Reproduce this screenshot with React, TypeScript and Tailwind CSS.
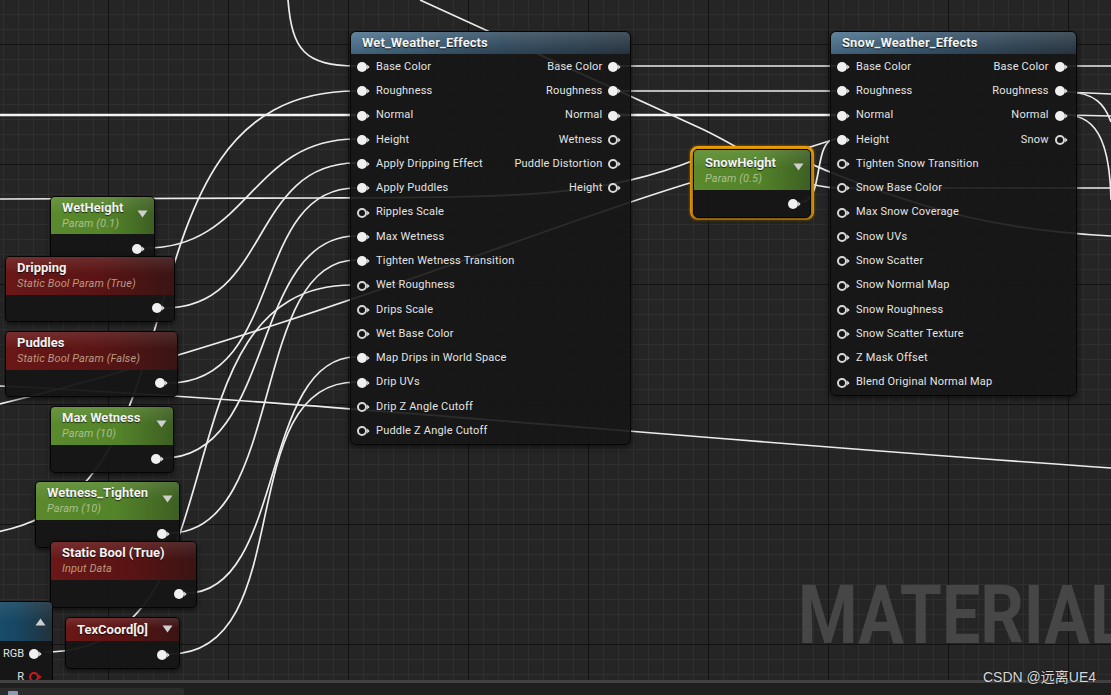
import React from "react";

type Row = [string, boolean];

function Pin({ filled, red }: { filled: boolean; red?: boolean }) {
  const c = red ? "#d01818" : "#f0f0f0";
  return (
    <svg width="14" height="12" viewBox="0 0 14 12" className="shrink-0">
      {filled ? (
        <circle cx="6" cy="6" r="5" fill={c} />
      ) : (
        <circle cx="6" cy="6" r="4" fill="#141414" stroke={red ? c : "#d8d8d8"} strokeWidth="2" />
      )}
      <path d="M11.2 3.6 L13.6 6 L11.2 8.4 Z" fill={red ? c : "#e8e8e8"} />
    </svg>
  );
}

function Tri({ up }: { up?: boolean }) {
  return (
    <svg width="11" height="8" viewBox="0 0 11 8">
      {up ? <path d="M0.5 7.5 L5.5 0.5 L10.5 7.5 Z" fill="#cfcfcf" /> : <path d="M0.5 0.5 L10.5 0.5 L5.5 7.5 Z" fill="#cfcfcf" />}
    </svg>
  );
}

function BigNode({ className, title, inputs, outputs, outPr }: { className: string; title: string; inputs: Row[]; outputs: Row[]; outPr: string }) {
  return (
    <div className={"absolute rounded-[6px] border border-[#060606] bg-[#151615]/90 shadow-[0_2px_6px_rgba(0,0,0,0.6)] " + className}>
      <div className="h-[22px] rounded-t-[5px] bg-[linear-gradient(to_bottom,rgba(255,255,255,0.12),rgba(0,0,0,0.15)),linear-gradient(to_right,#4b7490,#36536a_45%,#2a3a47)] pl-[11px] flex items-center">
        <span className="text-[13px] font-bold text-[#f2f2f2] tracking-[0.1px] [text-shadow:0_1px_1px_rgba(0,0,0,0.8)]">{title}</span>
      </div>
      <div className="flex justify-between pt-[1px]">
        <div className="flex flex-col">
          {inputs.map(([l, f]) => (
            <div key={l} className="h-[24.27px] flex items-center pl-[5px]">
              <Pin filled={f} />
              <span className="ml-[6px] text-[11px] tracking-[0.2px] text-[#e4e4e4] whitespace-nowrap">{l}</span>
            </div>
          ))}
        </div>
        <div className={"flex flex-col items-end " + outPr}>
          {outputs.map(([l, f]) => (
            <div key={l} className="h-[24.27px] flex items-center">
              <span className="mr-[5px] text-[11px] tracking-[0.2px] text-[#e4e4e4] whitespace-nowrap">{l}</span>
              <Pin filled={f} />
            </div>
          ))}
        </div>
      </div>
    </div>
  );
}

function ParamNode({
  className,
  title,
  sub,
  red,
  tri,
  headH,
  bodyH,
}: {
  className: string;
  title: string;
  sub?: string;
  red?: boolean;
  tri?: boolean;
  headH: string;
  bodyH: string;
}) {
  const head = red
    ? "bg-[linear-gradient(to_bottom,rgba(255,255,255,0.10),rgba(255,255,255,0)_45%),linear-gradient(to_right,#6a1717,#5a1414_55%,#3a1414)]"
    : "bg-[linear-gradient(to_bottom,rgba(255,255,255,0.10),rgba(255,255,255,0)_45%),linear-gradient(to_right,#5a8a2c,#54842a_55%,#3d5f22)]";
  return (
    <div className={"absolute rounded-[5px] border border-[#050505] bg-[#141514]/95 shadow-[0_2px_5px_rgba(0,0,0,0.6)] " + className}>
      <div className={"relative rounded-t-[4px] pl-[11px] " + head + " " + headH + (sub ? " pt-[2px]" : " flex items-center")}>
        <div className="text-[13px] leading-[17px] font-bold text-[#f2f2f2] [text-shadow:0_1px_1px_rgba(0,0,0,0.7)] whitespace-nowrap">{title}</div>
        {sub && (
          <div className={"text-[11px] leading-[14px] italic mt-[1px] tracking-[0.1px] whitespace-nowrap " + (red ? "text-[#b99a82]" : "text-[#a9bf8c]")}>{sub}</div>
        )}
        {tri && (
          <div className={"absolute right-[6px] " + (sub ? "top-[13px]" : "top-[7px]")}>
            <Tri />
          </div>
        )}
      </div>
      <div className={"flex items-center justify-end pr-[9px] " + bodyH}>
        <Pin filled />
      </div>
    </div>
  );
}

const wetIn: Row[] = [
  ["Base Color", true],
  ["Roughness", true],
  ["Normal", true],
  ["Height", true],
  ["Apply Dripping Effect", true],
  ["Apply Puddles", true],
  ["Ripples Scale", false],
  ["Max Wetness", true],
  ["Tighten Wetness Transition", true],
  ["Wet Roughness", false],
  ["Drips Scale", false],
  ["Wet Base Color", false],
  ["Map Drips in World Space", true],
  ["Drip UVs", true],
  ["Drip Z Angle Cutoff", false],
  ["Puddle Z Angle Cutoff", false],
];
const wetOut: Row[] = [
  ["Base Color", true],
  ["Roughness", true],
  ["Normal", true],
  ["Wetness", false],
  ["Puddle Distortion", false],
  ["Height", false],
];
const snowIn: Row[] = [
  ["Base Color", true],
  ["Roughness", true],
  ["Normal", true],
  ["Height", true],
  ["Tighten Snow Transition", false],
  ["Snow Base Color", false],
  ["Max Snow Coverage", false],
  ["Snow UVs", false],
  ["Snow Scatter", false],
  ["Snow Normal Map", false],
  ["Snow Roughness", false],
  ["Snow Scatter Texture", false],
  ["Z Mask Offset", false],
  ["Blend Original Normal Map", false],
];
const snowOut: Row[] = [
  ["Base Color", true],
  ["Roughness", true],
  ["Normal", true],
  ["Snow", false],
];

const wires: string[] = [
  "M 288 0 C 292 50 305 66 356 66",
  "M -40 535 C 230 535 90 91 356 91",
  "M 146 248 C 250 248 250 139 356 139",
  "M 165 308 C 270 308 250 163 356 163",
  "M 169 383 C 285 383 250 188 356 188",
  "M 164 458 C 275 458 250 236 356 236",
  "M 170 533 C 285 533 250 260 356 260",
  "M 187 593 C 285 593 260 357 356 357",
  "M 170 654 C 300 654 230 382 356 382",
  "M 45 652 C 250 652 150 285 352 285",
  "M 619 66 L 836 66",
  "M 619 91 L 836 91",
  "M 0 199 L 320 198 C 520 197 600 198 700 158 C 760 136 800 160 830 172 C 930 212 1000 230 1111 236",
  "M 0 404 C 300 330 560 220 700 180 C 770 160 800 150 836 139",
  "M 801 202 C 825 202 812 139 836 139",
  "M 420 0 L 700 128 C 760 156 790 188 840 188 L 1111 188",
  "M 0 386 C 300 400 700 440 1111 468",
  "M 1066 66 L 1111 66",
  "M 1066 92 L 1111 94",
  "M 1066 92 C 1095 92 1105 105 1111 122",
  "M 1066 115 L 1111 116",
  "M 1066 115 C 1100 115 1110 150 1111 200",
];

function Grid() {
  const minorV: number[] = [];
  const minorH: number[] = [];
  for (let x = 3; x < 1111; x += 15) minorV.push(x);
  for (let y = 14; y < 690; y += 15) minorH.push(y);
  return (
    <svg className="absolute inset-0" width="1111" height="680">
      {minorV.map((x) => (
        <line key={"v" + x} x1={x + 0.5} y1="0" x2={x + 0.5} y2="680" stroke={(x - 108) % 120 === 0 ? "#121212" : "#2f2f2f"} strokeWidth="1" />
      ))}
      {minorH.map((y) => (
        <line key={"h" + y} x1="0" y1={y + 0.5} x2="1111" y2={y + 0.5} stroke={(y - 44) % 120 === 0 ? "#121212" : "#2f2f2f"} strokeWidth="1" />
      ))}
      {minorV.filter((x) => (x - 108) % 120 === 0).map((x) => (
        <line key={"V" + x} x1={x + 0.5} y1="0" x2={x + 0.5} y2="680" stroke="#121212" strokeWidth="1" />
      ))}
    </svg>
  );
}

function Wires() {
  return (
    <svg className="absolute inset-0" width="1111" height="680">
      <path d="M 0 115 L 356 115" stroke="#f4f4f4" strokeWidth="2.4" fill="none" />
      <path d="M 619 115 L 836 115" stroke="#f4f4f4" strokeWidth="2.4" fill="none" />
      {wires.map((d, i) => (
        <path key={i} d={d} stroke="#ececec" strokeWidth="1.7" fill="none" />
      ))}
    </svg>
  );
}

export default function App() {
  return (
    <div className="w-[1111px] h-[695px] overflow-hidden flex flex-col bg-[#1d1d1d] font-[family-name:Roboto,'Liberation_Sans',sans-serif] relative">
      <div className="relative h-[680px] shrink-0 overflow-hidden bg-[#252525]">
        <Grid />
        <div className="absolute left-[798px] top-[566px] origin-left scale-x-[0.84] text-[81px] leading-[100px] font-bold text-[#4a4a4a]/90 whitespace-nowrap select-none">
          MATERIAL
        </div>
        <Wires />

        <BigNode className="left-[350px] top-[31px] w-[281px] h-[414px]" title="Wet_Weather_Effects" inputs={wetIn} outputs={wetOut} outPr="pr-[9px]" />
        <BigNode className="left-[830px] top-[31px] w-[247px] h-[365px]" title="Snow_Weather_Effects" inputs={snowIn} outputs={snowOut} outPr="pr-[10px]" />

        <div className="absolute left-[690px] top-[146px] w-[124px] h-[74px] rounded-[8px] border-[3px] border-[#f0a00a] shadow-[0_0_3px_rgba(240,160,0,0.6)]" />
        <ParamNode className="left-[693px] top-[149px] w-[118px]" title="SnowHeight" sub="Param (0.5)" tri headH="h-[40px] pt-[4px]" bodyH="h-[27px]" />

        <ParamNode className="left-[50px] top-[196px] w-[105px]" title="WetHeight" sub="Param (0.1)" tri headH="h-[37px]" bodyH="h-[30px]" />
        <ParamNode className="left-[5px] top-[256px] w-[170px]" title="Dripping" sub="Static Bool Param (True)" red headH="h-[38px]" bodyH="h-[26px]" />
        <ParamNode className="left-[5px] top-[331px] w-[173px]" title="Puddles" sub="Static Bool Param (False)" red headH="h-[38px]" bodyH="h-[26px]" />
        <ParamNode className="left-[50px] top-[406px] w-[124px]" title="Max Wetness" sub="Param (10)" tri headH="h-[38px]" bodyH="h-[27px]" />
        <ParamNode className="left-[35px] top-[481px] w-[145px]" title="Wetness_Tighten" sub="Param (10)" tri headH="h-[38px]" bodyH="h-[27px]" />
        <ParamNode className="left-[50px] top-[541px] w-[147px]" title="Static Bool (True)" sub="Input Data" red headH="h-[38px]" bodyH="h-[27px]" />
        <ParamNode className="left-[65px] top-[617px] w-[115px]" title="TexCoord[0]" red tri headH="h-[23px]" bodyH="h-[27px]" />

        <div className="absolute left-[-40px] top-[601px] w-[93px] h-[100px] rounded-[5px] border border-[#050505] bg-[#141514]/95">
          <div className="relative h-[39px] rounded-t-[4px] bg-[linear-gradient(to_bottom,rgba(255,255,255,0.08),rgba(255,255,255,0)_50%),linear-gradient(to_right,#1d5878,#174763_60%,#21323d)]">
            <div className="absolute right-[6px] top-[16px]">
              <Tri up />
            </div>
          </div>
          <div className="flex flex-col items-end pr-[10px] pt-[1px]">
            <div className="h-[24px] flex items-center">
              <span className="mr-[4px] text-[11px] text-[#e4e4e4]">RGB</span>
              <Pin filled />
            </div>
            <div className="h-[22px] flex items-center">
              <span className="mr-[4px] text-[11px] leading-[12px] text-[#e4e4e4]">R</span>
              <Pin filled={false} red />
            </div>
          </div>
        </div>
      </div>
      <div className="h-[15px] shrink-0 border-t-[3px] border-[#414141] bg-[#1f1f1f] flex items-end">
        <div className="w-[184px] h-[7px] bg-[#2c2c2c] rounded-tr-[2px] pl-[8px] pt-[3px]">
          <div className="w-[10px] h-[4px] bg-[#8a9ab0] rounded-t-[1px]" />
        </div>
      </div>
      <div className="absolute left-[983px] top-[667px] text-[14px] leading-[20px] text-[#d8d8d8] font-[family-name:'Liberation_Sans','Noto_Sans_CJK_SC',sans-serif] [text-shadow:0_0_2px_rgba(0,0,0,0.8)] whitespace-nowrap">
        CSDN @远离UE4
      </div>
    </div>
  );
}
